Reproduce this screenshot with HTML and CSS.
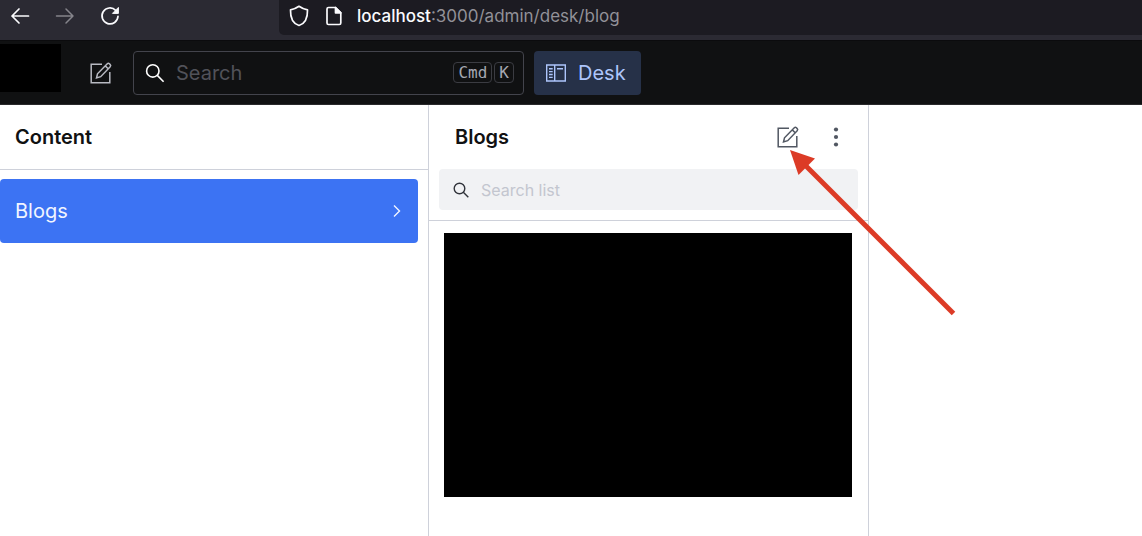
FILE: index.html
```html
<!DOCTYPE html>
<html lang="en">
<head>
<meta charset="utf-8">
<title>Blogs – Desk</title>
<link rel="stylesheet" href="styles.css">
</head>
<body>
<div class="browser">
  <div class="browser-actions">
    <button class="icon-button" aria-label="Back"><svg width="20" height="20" viewBox="0 0 20 20" fill="none" stroke="#fbfbfe" stroke-width="1.7" stroke-linecap="round" stroke-linejoin="round"><path d="M18.500 10H2M9 3L2 10l7 7"/></svg></button>
    <button class="icon-button" aria-label="Forward"><svg width="20" height="20" viewBox="0 0 20 20" fill="none" stroke="#85848b" stroke-width="1.500" stroke-linecap="round" stroke-linejoin="round"><path d="M1.500 10H18M11 3l7 7-7 7"/></svg></button>
    <button class="icon-button" aria-label="Reload"><svg width="20" height="20" viewBox="0 0 20 20" fill="none" stroke="#fbfbfe" stroke-width="1.700" stroke-linecap="round"><path d="M15.700 4.300A8 8 0 1 0 18 10.300"/><path d="M18.400 1.800v5.600h-5.600z" fill="#fbfbfe" stroke-width="1" stroke-linejoin="round"/></svg></button>
  </div>
  <div class="address">
    <svg width="20" height="22" viewBox="0 0 20 22" fill="none" stroke="#fbfbfe" stroke-width="1.700" stroke-linejoin="round"><path d="M10 1.300C7.500 3.100 4.500 4.300 1.500 4.900C1.300 12.500 3.300 18.300 10 20.500C16.700 18.300 18.700 12.500 18.500 4.900C15.500 4.300 12.500 3.100 10 1.300z"/></svg>
    <svg class="page-icon" width="16" height="20" viewBox="0 0 16 20" fill="none" stroke="#fbfbfe" stroke-width="1.700" stroke-linejoin="round"><path d="M2.500 1.500H9.500L14.800 6.800V17a1.500 1.500 0 0 1-1.500 1.500H2.500A1.500 1.500 0 0 1 1 17V3A1.500 1.500 0 0 1 2.500 1.500z"/><path d="M9.500 1.500V6.800H14.800z" fill="#fbfbfe"/></svg>
    <span class="url"><span class="host">localhost</span>:3000/admin/desk/blog</span>
  </div>
</div>
<header class="navbar">
  <div class="brand"></div>
  <button class="icon-button compose" aria-label="Create new document"><svg width="24" height="24" viewBox="0 0 24 24" fill="none" stroke="currentColor" stroke-width="1.500"><path d="M13 3.200H2.200V21.800H20.800V11"/><path d="M7.500 17l1-4.200L18.300 2.800a1.500 1.500 0 0 1 2.100 0l.8.800a1.500 1.500 0 0 1 0 2.100L11.700 15.700zM16.300 4.900l2.900 2.900"/></svg></button>
  <label class="search">
    <svg width="20" height="20" viewBox="0 0 20 20" fill="none" stroke="#fff" stroke-width="1.600"><circle cx="7.800" cy="7.900" r="6.200"/><path d="M12.300 12.400l6.300 6.300"/></svg>
    <input type="search" placeholder="Search" aria-label="Search">
    <span class="keys"><kbd>Cmd</kbd><kbd>K</kbd></span>
  </label>
  <a class="tool" href="#"><svg width="20" height="18" viewBox="0 0 20 18" fill="none" stroke="currentColor" stroke-width="1.400"><path d="M.7 1H19.300V17H.7zM8.700 1V17M3 4.700H6.700M3 7.600H6.700M3 10.500H6.700M3 13.400H6.700M11 4.700H17"/></svg>Desk</a>
</header>
<main class="panes">
  <section class="pane">
    <div class="pane-header"><h1>Content</h1></div>
    <nav class="menu">
      <a class="menu-item" href="#">Blogs<svg width="8" height="14" viewBox="0 0 8 14" fill="none" stroke="currentColor" stroke-width="1.400"><path d="M1 1.500l5.500 5.500L1 12.500"/></svg></a>
    </nav>
  </section>
  <section class="pane">
    <div class="pane-header list-header">
      <h2>Blogs</h2>
      <div class="pane-actions">
        <div class="create">
          <button class="icon-button" aria-label="Create new blog"><svg width="24" height="24" viewBox="0 0 24 24" fill="none" stroke="currentColor" stroke-width="1.500"><path d="M13 3.200H2.200V21.800H20.800V11"/><path d="M7.500 17l1-4.200L18.300 2.800a1.500 1.500 0 0 1 2.100 0l.8.800a1.500 1.500 0 0 1 0 2.100L11.700 15.700zM16.300 4.900l2.900 2.900"/></svg></button>
          <svg class="arrow" width="166" height="166" viewBox="0 0 166 166" fill="#dc3b26"><path d="M0 0L25 8.500L8.500 25z"/><path d="M14 14L163.500 163.500" stroke="#dc3b26" stroke-width="5"/></svg>
        </div>
        <button class="icon-button" aria-label="More options"><svg width="24" height="24" viewBox="0 0 24 24" fill="currentColor"><circle cx="12" cy="4.500" r="2.100"/><circle cx="12" cy="12" r="2.100"/><circle cx="12" cy="19.500" r="2.100"/></svg></button>
      </div>
    </div>
    <div class="filter-row">
      <label class="filter">
        <svg width="16" height="16" viewBox="0 0 16 16" fill="none" stroke="#31343b" stroke-width="1.400"><circle cx="6.500" cy="6.500" r="5.300"/><path d="M10.300 10.300l5 5"/></svg>
        <input type="search" placeholder="Search list" aria-label="Search list">
      </label>
    </div>
    <div class="documents"></div>
  </section>
</main>
</body>
</html>
```
FILE: styles.css
```css
* { box-sizing: border-box; }
body {
  margin: 0;
  min-height: 100vh;
  display: flex;
  flex-direction: column;
  background: #fff;
  color: #101112;
  font-family: Inter, "Liberation Sans", sans-serif;
  font-size: 20px;
  line-height: 24px;
}
svg { display: block; flex: none; }
h1, h2 { margin: 0; font-size: 20px; font-weight: 600; }
a { text-decoration: none; }
.icon-button {
  display: block;
  padding: 0;
  border: 0;
  background: none;
  color: inherit;
}
input {
  flex: 1;
  min-width: 0;
  padding: 0;
  border: 0;
  outline: 0;
  background: none;
  color: inherit;
  font: inherit;
  appearance: none;
}
.browser {
  display: flex;
  height: 40px;
  padding-bottom: 5px;
  background: #2b2a33;
}
.browser-actions {
  display: flex;
  align-items: center;
  gap: 25px;
  width: 279px;
  padding: 0 10px 4px;
}
.address {
  flex: 1;
  display: flex;
  align-items: center;
  padding: 0 10px 4px;
  background: #1c1b22;
  border-bottom-left-radius: 5px;
}
.page-icon { margin-left: 17px; }
.url {
  margin-left: 15px;
  color: #929198;
  font-size: 17px;
}
.host { color: #fbfbfe; font-weight: 500; }
.navbar {
  display: flex;
  align-items: center;
  height: 65px;
  border-top: 1px solid #0b0b0d;
  border-bottom: 1px solid #29292b;
  background: #101112;
}
.brand {
  align-self: flex-start;
  width: 61px;
  height: 48px;
  margin-top: 3px;
  background: #000;
}
.compose { margin: 0 20px 0 28px; color: #b8bac2; }
.search {
  display: flex;
  align-items: center;
  flex: 0 1 391px;
  min-width: 0;
  height: 44px;
  padding: 0 9px 0 11px;
  border: 1px solid #43444c;
  border-radius: 4px;
  color: #fff;
}
.search input { margin-left: 11px; }
.search input::placeholder { color: #515259; opacity: 1; }
.keys { display: flex; gap: 2px; }
kbd {
  padding: 0 4px;
  border: 1px solid #3b3c42;
  border-radius: 4px;
  color: #a5a8b1;
  font: 16px/19px "DejaVu Sans Mono", monospace;
}
.tool {
  display: flex;
  align-items: center;
  gap: 12px;
  height: 44px;
  margin-left: 10px;
  padding: 0 15px 0 12px;
  border-radius: 4px;
  background: #263148;
  color: #adc5fb;
}
.panes {
  flex: 1;
  display: grid;
  grid-template-columns: 429fr 440fr 273fr;
}
.pane { min-width: 0; border-right: 1px solid #ced1da; }
.pane-header {
  display: flex;
  align-items: center;
  height: 65px;
  padding: 0 15px;
  border-bottom: 1px solid #ced1da;
}
.menu { padding: 9px 10px 0 0; }
.menu-item {
  display: flex;
  align-items: center;
  justify-content: space-between;
  height: 64px;
  padding: 0 17px 0 15px;
  border-radius: 4px;
  background: #3c73f3;
  color: #f1f5ff;
}
.list-header {
  justify-content: space-between;
  height: 64px;
  padding: 0 20px 0 26px;
  border: 0;
}
.pane-actions { display: flex; gap: 24px; color: #515762; }
.create { position: relative; }
.arrow {
  position: absolute;
  top: 25px;
  left: 14px;
  z-index: 1;
  pointer-events: none;
}
.filter-row { padding: 0 10px 10px; border-bottom: 1px solid #ced1da; }
.filter {
  display: flex;
  align-items: center;
  gap: 12px;
  height: 41px;
  padding: 0 14px;
  border-radius: 4px;
  background: #f1f2f4;
  font-size: 16px;
}
.filter input::placeholder { color: #c3c6cf; opacity: 1; }
.documents {
  height: 264px;
  margin: 12px 16px 0 15px;
  background: #000;
}
```
